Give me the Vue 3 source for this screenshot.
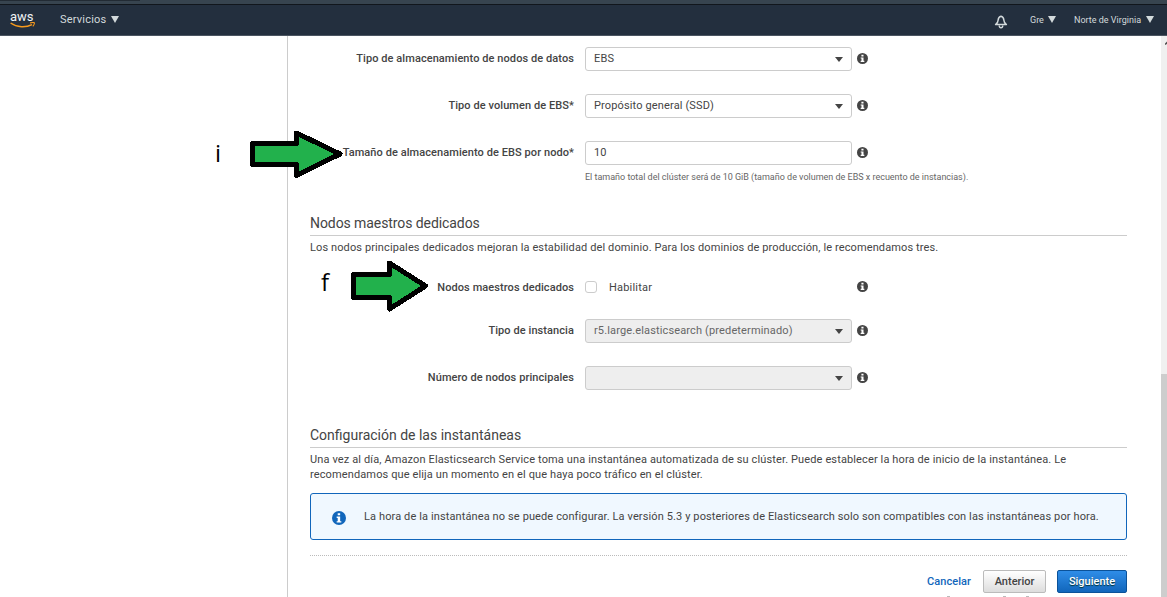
<script setup>
const storage = [
  { label: 'Tipo de almacenamiento de nodos de datos', value: 'EBS', select: true },
  { label: 'Tipo de volumen de EBS*', value: 'Propósito general (SSD)', select: true },
  { label: 'Tamaño de almacenamiento de EBS por nodo*', value: '10', select: false },
]
const masters = [
  { label: 'Tipo de instancia', value: 'r5.large.elasticsearch (predeterminado)' },
  { label: 'Número de nodos principales', value: '' },
]
</script>

<template>
  <div class="app">
    <div class="chrome"><i></i></div>
    <header class="nav">
      <div class="logo">
        <span>aws</span>
        <svg width="26" height="7" viewBox="0 0 26 7">
          <path d="M0.6 1C7 5.600 16 5.700 22 2.600" fill="none" stroke="#f79a1c" stroke-width="1.5" />
          <path d="M20 .9C23 .2 24.600 .3 24.400 1.300C24.300 2.500 23.500 3.700 22.800 4.300" fill="none" stroke="#f79a1c" stroke-width="1.1" />
        </svg>
      </div>
      <span class="services">Servicios</span><b class="tri t1"></b>
      <svg class="bell" width="14" height="14" viewBox="0 0 14 14">
        <path d="M7 1.200C4.800 1.600 4.300 3.200 4.100 5.200C4 7.400 2.900 8.600 1.600 9.600H12.400C11.100 8.600 10 7.400 9.900 5.200C9.700 3.200 9.200 1.600 7 1.200Z" fill="none" stroke="#d3dadc" stroke-width="1.5" stroke-linejoin="round" />
        <path d="M5.200 10.500C5.300 13.400 8.700 13.400 8.800 10.500" fill="none" stroke="#d3dadc" stroke-width="1.4" />
      </svg>
      <span class="user">Gre</span><b class="tri t2"></b>
      <span class="region">Norte de Virginia</span><b class="tri t3"></b>
    </header>
    <div class="body">
      <aside></aside>
      <main>
        <div class="rows">
          <div v-for="r in storage" :key="r.label" class="row">
            <label><span>{{ r.label }}</span></label>
            <div class="field"><span>{{ r.value }}</span><b v-if="r.select" class="caret"></b></div>
            <svg class="info" width="11" height="11" viewBox="0 0 12 12"><circle cx="6" cy="6" r="6" /><path d="M4.800 1.900h2.300v1.800H4.800zM4 4.800h3.100v3.700H8v1.300H4V8.500h.9V6H4z" fill="#fff" /></svg>
          </div>
        </div>
        <p class="hint"><span>El tamaño total del clúster será de 10 GiB (tamaño de volumen de EBS x recuento de instancias).</span></p>
        <h2 class="h1"><span>Nodos maestros dedicados</span></h2>
        <p class="desc"><span class="d1">Los nodos principales dedicados mejoran la estabilidad del dominio. Para los dominios de producción, le recomendamos tres.</span></p>
        <div class="row check">
          <label><span>Nodos maestros dedicados</span></label>
          <div class="enable"><i class="box"></i><span>Habilitar</span></div>
          <svg class="info" width="11" height="11" viewBox="0 0 12 12"><circle cx="6" cy="6" r="6" /><path d="M4.800 1.900h2.300v1.800H4.800zM4 4.800h3.100v3.700H8v1.300H4V8.500h.9V6H4z" fill="#fff" /></svg>
        </div>
        <div class="rows second">
          <div v-for="r in masters" :key="r.label" class="row">
            <label><span>{{ r.label }}</span></label>
            <div class="field off"><span>{{ r.value }}</span><b class="caret"></b></div>
            <svg class="info" width="11" height="11" viewBox="0 0 12 12"><circle cx="6" cy="6" r="6" /><path d="M4.800 1.900h2.300v1.800H4.800zM4 4.800h3.100v3.700H8v1.300H4V8.500h.9V6H4z" fill="#fff" /></svg>
          </div>
        </div>
        <h2 class="h2"><span>Configuración de las instantáneas</span></h2>
        <p class="desc"><span class="d2">Una vez al día, Amazon Elasticsearch Service toma una instantánea automatizada de su clúster. Puede establecer la hora de inicio de la instantánea. Le</span><br><span class="d2">recomendamos que elija un momento en el que haya poco tráfico en el clúster.</span></p>
        <div class="alert">
          <svg width="14" height="14" viewBox="0 0 12 12"><circle cx="6" cy="6" r="6" fill="#1166bb" /><path d="M4.900 1.900h2.100v1.800H4.900zM4 4.800h3v3.900h1v1.200H4V8.700h.9V6H4z" fill="#fff" /></svg>
          <span>La hora de la instantánea no se puede configurar. La versión 5.3 y posteriores de Elasticsearch solo son compatibles con las instantáneas por hora.</span>
        </div>
        <div class="actions">
          <a>Cancelar</a>
          <button class="prev"><span>Anterior</span></button>
          <button class="next"><span>Siguiente</span></button>
        </div>
        <div class="specks"><i></i><i></i><i></i></div>
      </main>
      <div class="scroll">
        <svg width="6" height="12" viewBox="0 0 6 12"><path d="M4 9V7.500L6 5.500V8z" fill="#505050" /></svg>
        <i></i>
      </div>
    </div>
    <span class="mark mi">i</span>
    <span class="mark mf">f</span>
    <svg class="arrow ar1" width="98" height="50" viewBox="0 0 98 50" shape-rendering="crispEdges"><path d="M4.500 14.500H48.500V4L92 25L48.500 46.500V35.500H4.500Z" /></svg>
    <svg class="arrow ar2" width="80" height="54" viewBox="0 0 80 54" shape-rendering="crispEdges"><path d="M3.500 14.500H39.500V3L75.500 26L39.500 49V37.500H3.500Z" /></svg>
  </div>
</template>

<style>
html, body { margin: 0; overflow: hidden; background: #fff; }
</style>

<style scoped>
* { box-sizing: border-box; }
.app { position: relative; width: 1167px; height: 597px; overflow: hidden; background: #fff; font: 11px/15px Roboto, "Liberation Sans", sans-serif; color: #444; }
span { white-space: nowrap; }
.chrome { height: 5px; background: #37444f; border-bottom: 1px solid #11161c; }
.chrome i { display: block; width: 140px; height: 1px; background: #222b34; }
.nav { height: 31px; display: flex; align-items: flex-start; background: #232f3e; border-bottom: 1px solid #4b5561; color: #d3dadc; }
.logo { width: 26px; margin: 4px 0 0 10px; flex: none; }
.logo span { display: block; height: 13px; font-size: 13px; line-height: 15px; color: #f0f3f5; letter-spacing: -.1px; }
.logo svg { display: block; }
.services { width: 46px; margin: 7px 0 0 24px; letter-spacing: .2px; }
.tri { width: 0; border: 4px solid transparent; border-top: 7px solid #d3dadc; border-bottom: 0; flex: none; }
.t1 { margin: 11px 0 0 5px; }
.bell { margin: 10px 0 0 875px; flex: none; }
.user, .region { font-size: 9px; margin-top: 8px; }
.user { width: 15px; margin-left: 22px; }
.t2 { margin: 11px 0 0 3px; }
.region { width: 67px; margin-left: 18px; }
.t3 { margin: 11px 0 0 5px; }
.body { display: flex; height: 561px; }
aside { width: 288px; border-right: 1px solid #ccc; flex: none; }
main { width: 873px; padding: 11px 34px 0 22px; flex: none; }
.scroll { width: 6px; background: #f0f0f0; }
.scroll svg { display: block; }
.scroll i { display: block; height: 223px; margin-top: 326px; background: #cdcdcd; }
p, h2 { margin: 0; font-weight: 400; }
.rows { display: grid; gap: 23px; }
.row { display: flex; align-items: center; height: 24px; }
label { width: 264px; margin-right: 11px; font-weight: 500; letter-spacing: .075px; flex: none; display: flex; justify-content: flex-end; }
.field { width: 267px; height: 24px; border: 1px solid #ccc; border-radius: 3px; padding: 0 8px; display: flex; align-items: center; justify-content: space-between; color: #444; letter-spacing: .14px; }
.field span { margin-top: -1px; }
label span { margin-top: -1px; }
.off { background: #eee; color: #666; }
.caret { border: 4px solid transparent; border-top: 5px solid #444; border-bottom: 0; }
.info { margin: -2px 0 0 5px; fill: #444; }
.hint { margin: 5px 0 0 275px; font-size: 9px; height: 14px; color: #666; letter-spacing: -.01px; }
.h1, .h2 { font-size: 14px; line-height: 20px; height: 23px; border-bottom: 1px solid #ccc; }
.h1 { margin-top: 29px; letter-spacing: -.08px; }
.h2 { margin-top: 35px; }
.desc { padding-top: 4px; }
.d1 { letter-spacing: .112px; }
.d2 { letter-spacing: .125px; }
.check { margin-top: 20px; }
.check label span, .enable span { margin-top: 1px; }
.enable { width: 267px; display: flex; align-items: center; gap: 12px; letter-spacing: .2px; }
.box { width: 12px; height: 12px; border: 1px solid #ccc; border-radius: 3px; }
.second { margin-top: 20px; }
.alert { height: 47px; margin-top: 11px; border: 1px solid #1166bb; border-radius: 3px; background: #f0f8ff; display: flex; align-items: center; padding-left: 21px; gap: 18px; letter-spacing: .115px; }
.alert svg { margin-top: 2px; }
.actions { margin-top: 15px; border-top: 1px dotted #bbb; padding-top: 14px; display: flex; justify-content: flex-end; align-items: center; }
.actions a { color: #1166bb; font-weight: 500; margin-right: 12px; width: 44px; margin-top: -1px; letter-spacing: .07px; }
button { height: 23px; padding: 0 0 1px; border-radius: 2px; font: 500 11px/15px Roboto, sans-serif; border: 1px solid #bbb; }
.prev { width: 63px; background: linear-gradient(#fff, #ddd); color: #444; margin-right: 11px; }
.next { width: 70px; background: linear-gradient(#2f8de8, #1166bb); color: #fff; border-color: #0b5299; text-shadow: 0 1px 1px #033; }
.specks { display: flex; padding-left: 637px; margin-top: 3px; }
.specks i { width: 3px; height: 1px; background: #bbb; margin-right: 53px; }
.specks i + i { margin-right: 20px; }
.mark { position: absolute; color: #000; font: 24px/28px "Open Sans", sans-serif; }
.mi { left: 215px; top: 139px; }
.mf { left: 321px; top: 268px; }
.arrow { position: absolute; fill: #22b14c; stroke: #000; stroke-width: 5; stroke-linejoin: round; }
.ar1 { left: 248px; top: 129px; }
.ar2 { left: 350px; top: 260px; }
</style>
